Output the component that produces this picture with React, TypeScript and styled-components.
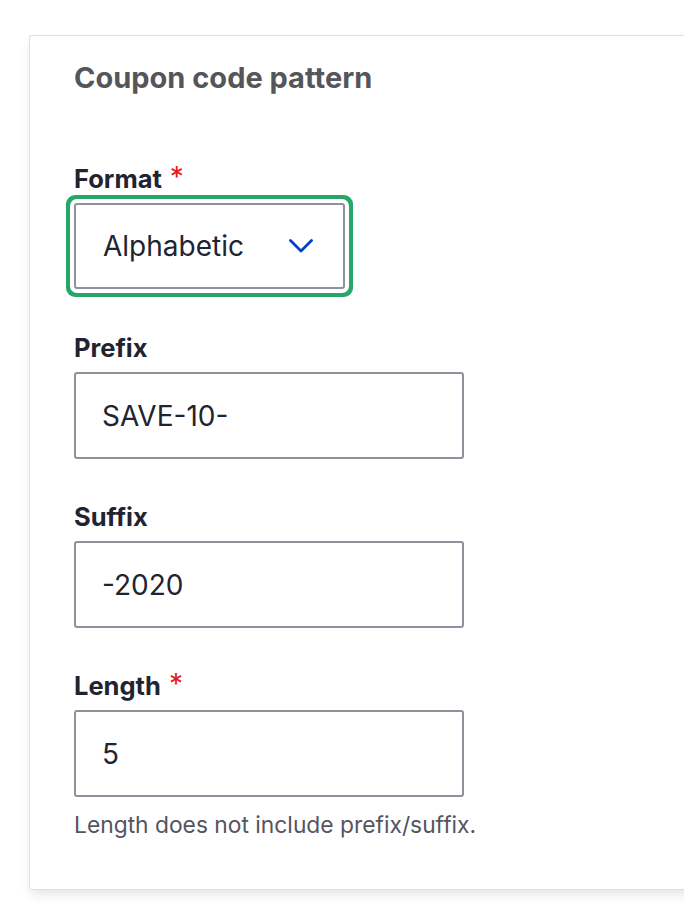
import React from "react";
import styled, { createGlobalStyle } from "styled-components";

const Global = createGlobalStyle`
  html, body { margin: 0; padding: 0; background: #ffffff; overflow: hidden; }
  body { font-family: Inter, "Noto Sans", "Liberation Sans", sans-serif; }
`;

const Page = styled.div`
  width: 684px;
  height: 920px;
  overflow: hidden;
  padding: 35px 0 0 29px;
  box-sizing: border-box;
`;

const Card = styled.fieldset`
  margin: 0;
  width: 720px;
  box-sizing: border-box;
  border: 1px solid #dedee4;
  border-radius: 2px;
  background: #ffffff;
  box-shadow: 0 6px 10px -2px rgba(34, 35, 48, 0.12);
  padding: 24px 0 50px 44px;
  display: flex;
  flex-direction: column;
`;

const Title = styled.h2`
  margin: 0 0 68px;
  font-size: 29px;
  line-height: 36px;
  font-weight: 700;
  color: #55565b;
`;

const Field = styled.div<{ $gap?: number }>`
  display: flex;
  flex-direction: column;
  align-items: flex-start;
  margin-bottom: ${(p) => p.$gap ?? 43}px;
`;

const Label = styled.label`
  font-size: 25.5px;
  line-height: 30px;
  font-weight: 700;
  color: #222330;
  margin-bottom: 9px;
  display: flex;
  align-items: flex-start;
  gap: 8px;
`;

const Star = styled.span`
  color: #e61c1c;
  font-size: 28px;
  line-height: 26px;
  font-weight: 400;
`;

const SelectBox = styled.div`
  width: 271px;
  height: 86px;
  box-sizing: border-box;
  border: 2px solid #8e929c;
  border-radius: 3px;
  box-shadow: 0 0 0 4px #ffffff, 0 0 0 8px #26a769;
  display: flex;
  align-items: center;
  justify-content: space-between;
  padding: 0 30px 0 27px;
  background: #fff;
`;

const Input = styled.div`
  width: 390px;
  height: 87px;
  box-sizing: border-box;
  border: 2px solid #8e929c;
  border-radius: 3px;
  display: flex;
  align-items: center;
  padding: 0 0 0 26px;
`;

const Value = styled.span`
  font-size: 28px;
  color: #222330;
`;

const Description = styled.div`
  margin-top: 14px;
  font-size: 22.8px;
  line-height: 28px;
  color: #545560;
`;

const Chevron = () => (
  <svg width="24" height="14" viewBox="0 0 24 14" fill="none">
    <path d="M1.5 1.5 L12 12 L22.5 1.5" stroke="#003ecc" strokeWidth="2.8" strokeLinecap="round" strokeLinejoin="round" />
  </svg>
);

export default function App() {
  return (
    <>
      <Global />
      <Page>
        <Card>
          <Title>Coupon code pattern</Title>
          <Field $gap={44}>
            <Label>
              Format <Star>*</Star>
            </Label>
            <SelectBox>
              <Value>Alphabetic</Value>
              <Chevron />
            </SelectBox>
          </Field>
          <Field>
            <Label>Prefix</Label>
            <Input>
              <Value>SAVE-10-</Value>
            </Input>
          </Field>
          <Field>
            <Label>Suffix</Label>
            <Input>
              <Value>-2020</Value>
            </Input>
          </Field>
          <Field $gap={0}>
            <Label>
              Length <Star>*</Star>
            </Label>
            <Input>
              <Value>5</Value>
            </Input>
            <Description>Length does not include prefix/suffix.</Description>
          </Field>
        </Card>
      </Page>
    </>
  );
}
